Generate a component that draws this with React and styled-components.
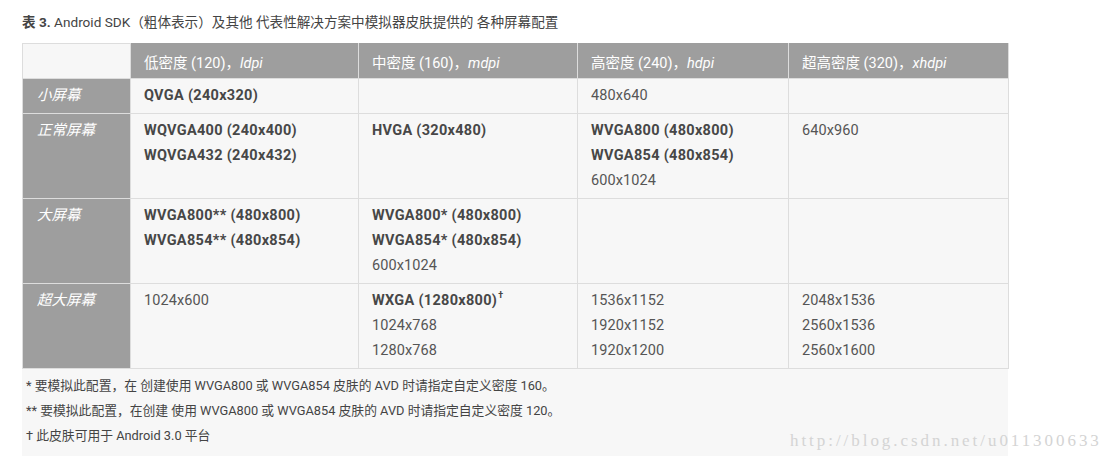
import React from "react";
import styled, { createGlobalStyle } from "styled-components";

const GlobalStyle = createGlobalStyle`
  body {
    margin: 0;
    background: #fff;
    font-family: Roboto, "Noto Sans CJK SC", sans-serif;
  }
`;

const columns = [108, 228, 219, 211, 220];

const heads = [
  ["低密度 (120)，", "ldpi"],
  ["中密度 (160)，", "mdpi"],
  ["高密度 (240)，", "hdpi"],
  ["超高密度 (320)，", "xhdpi"],
];

// each entry: [text, bold, sup]
const rows = [
  {
    name: "小屏幕",
    cells: [[["QVGA (240x320)", true]], [], [["480x640"]], []],
  },
  {
    name: "正常屏幕",
    cells: [
      [["WQVGA400 (240x400)", true], ["WQVGA432 (240x432)", true]],
      [["HVGA (320x480)", true]],
      [["WVGA800 (480x800)", true], ["WVGA854 (480x854)", true], ["600x1024"]],
      [["640x960"]],
    ],
  },
  {
    name: "大屏幕",
    cells: [
      [["WVGA800** (480x800)", true], ["WVGA854** (480x854)", true]],
      [["WVGA800* (480x800)", true], ["WVGA854* (480x854)", true], ["600x1024"]],
      [],
      [],
    ],
  },
  {
    name: "超大屏幕",
    cells: [
      [["1024x600"]],
      [["WXGA (1280x800)", true, "†"], ["1024x768"], ["1280x768"]],
      [["1536x1152"], ["1920x1152"], ["1920x1200"]],
      [["2048x1536"], ["2560x1536"], ["2560x1600"]],
    ],
  },
];

const notes = [
  "* 要模拟此配置，在 创建使用 WVGA800 或 WVGA854 皮肤的 AVD 时请指定自定义密度 160。",
  "** 要模拟此配置，在创建 使用 WVGA800 或 WVGA854 皮肤的 AVD 时请指定自定义密度 120。",
  "† 此皮肤可用于 Android 3.0 平台",
];

export default function App() {
  return (
    <>
      <GlobalStyle />
      <Page>
        <Caption>
          <b>表 3.</b> Android SDK（粗体表示）及其他 代表性解决方案中模拟器皮肤提供的 各种屏幕配置
        </Caption>
        <Table>
          <colgroup>
            {columns.map((w, i) => (
              <col key={i} style={{ width: w }} />
            ))}
          </colgroup>
          <thead>
            <tr>
              <Corner />
              {heads.map(([zh, en]) => (
                <HeadCell key={en}>
                  {zh}
                  <em>{en}</em>
                </HeadCell>
              ))}
            </tr>
          </thead>
          <tbody>
            {rows.map((row) => (
              <tr key={row.name}>
                <RowHead>{row.name}</RowHead>
                {row.cells.map((cell, i) => (
                  <Cell key={i}>
                    {cell.map(([text, bold, sup]) => (
                      <Line key={text} $bold={bold}>
                        {text}
                        {sup && <Sup>{sup}</Sup>}
                      </Line>
                    ))}
                  </Cell>
                ))}
              </tr>
            ))}
          </tbody>
        </Table>
        <Notes>
          {notes.map((n) => (
            <Note key={n}>{n}</Note>
          ))}
        </Notes>
        <Watermark>http://blog.csdn.net/u011300633</Watermark>
      </Page>
    </>
  );
}

const Page = styled.div`
  position: relative;
  width: 1113px;
  height: 461px;
  padding: 12px 22px 0;
  box-sizing: border-box;
`;

const Caption = styled.div`
  font-size: 13.6px;
  line-height: 20px;
  color: #444;
  margin-bottom: 11px;
  white-space: nowrap;
  b {
    font-weight: 700;
  }
`;

const Table = styled.table`
  width: 986px;
  table-layout: fixed;
  border-collapse: collapse;
  font-size: 14.5px;
`;

const Corner = styled.th`
  background: #f7f7f7;
  border: 1px solid #ddd;
`;

const HeadCell = styled.th`
  background: #9e9e9e;
  color: #fff;
  font-weight: 400;
  text-align: left;
  height: 34px;
  padding: 0 13px;
  border: 1px solid #ddd;
  border-top: 1px solid #9e9e9e;
  white-space: nowrap;
  em {
    font-style: italic;
  }
`;

const RowHead = styled.th`
  background: #9e9e9e;
  color: #fff;
  font-weight: 400;
  font-style: italic;
  text-align: left;
  vertical-align: top;
  padding: 4px 14px;
  line-height: 25px;
  border: 1px solid #ddd;
`;

const Cell = styled.td`
  background: #f7f7f7;
  color: #555;
  vertical-align: top;
  padding: 4px 13px 5px;
  border: 1px solid #ddd;
`;

const Line = styled.div`
  line-height: 25px;
  font-weight: ${(p) => (p.$bold ? 700 : 400)};
  letter-spacing: ${(p) => (p.$bold ? "0.3px" : "0.1px")};
  color: ${(p) => (p.$bold ? "#474747" : "#555")};
  white-space: nowrap;
`;

const Sup = styled.sup`
  font-size: 9px;
  line-height: 0;
  vertical-align: 7px;
  margin-left: 1px;
`;

const Notes = styled.div`
  width: 986px;
  box-sizing: border-box;
  background: #f7f7f7;
  padding: 4px 4px 8px;
  font-size: 12.8px;
  color: #444;
`;

const Note = styled.div`
  line-height: 25px;
  white-space: nowrap;
`;

const Watermark = styled.div`
  position: absolute;
  left: 790px;
  top: 431px;
  font-family: "Liberation Serif", serif;
  font-size: 17px;
  letter-spacing: 2.95px;
  color: #d4d4d4;
  white-space: nowrap;
`;
